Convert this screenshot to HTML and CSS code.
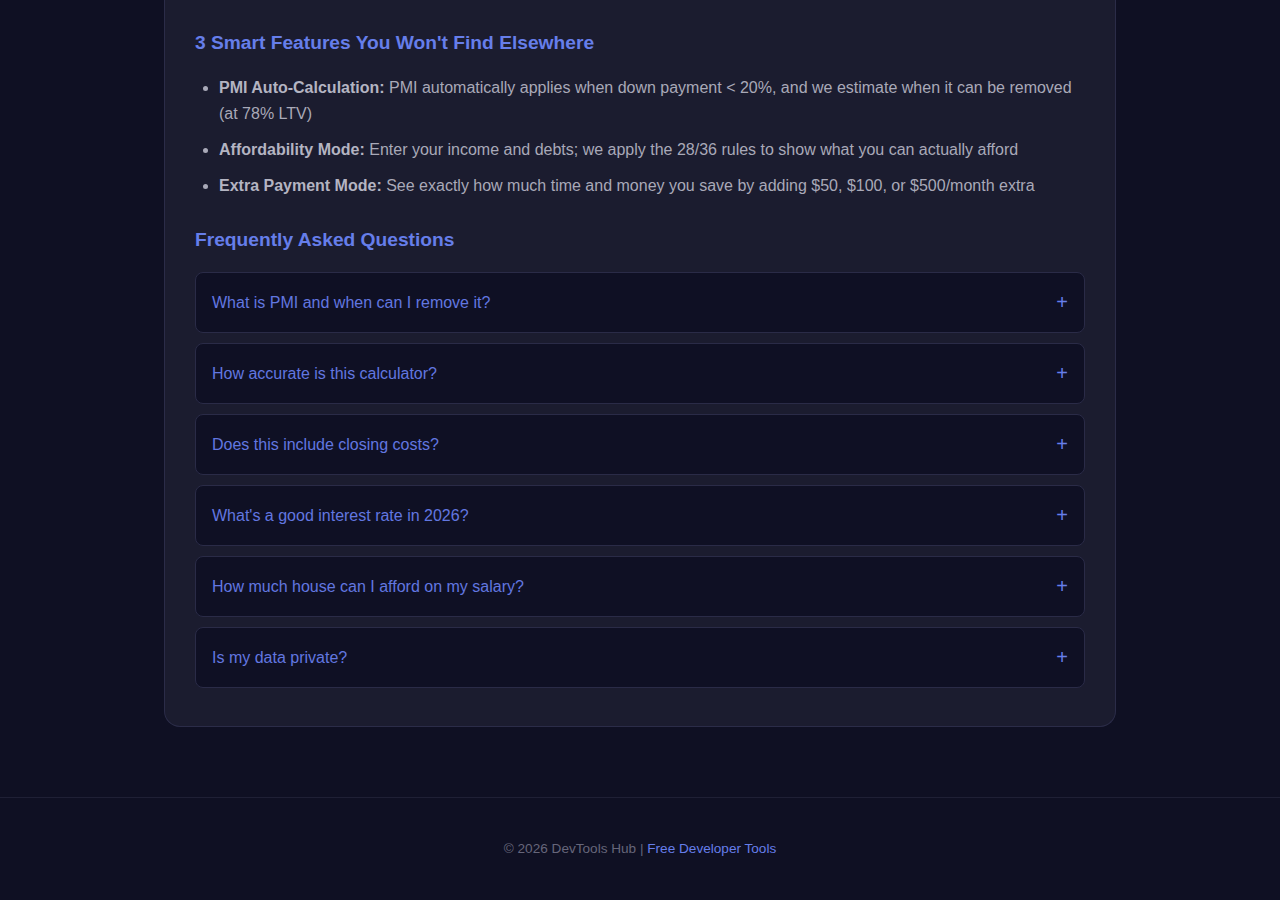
FILE: index.html
```html
<!DOCTYPE html>
<html lang="en">
<head>
    <meta charset="UTF-8">
    <meta name="viewport" content="width=device-width, initial-scale=1.0">
    <title>Mortgage Calculator - DevTools Hub</title>
    <link rel="stylesheet" href="styles.css">
</head>
<body>
    <main class="page">
        <section class="info-card">
            <h3>3 Smart Features You Won't Find Elsewhere</h3>
            <ul class="feature-list">
                <li><strong>PMI Auto-Calculation:</strong> PMI automatically applies when down payment &lt; 20%, and we estimate when it can be removed (at 78% LTV)</li>
                <li><strong>Affordability Mode:</strong> Enter your income and debts; we apply the 28/36 rules to show what you can actually afford</li>
                <li><strong>Extra Payment Mode:</strong> See exactly how much time and money you save by adding $50, $100, or $500/month extra</li>
            </ul>

            <h3>Frequently Asked Questions</h3>
            <div class="faq">
                <div class="faq-item"><span class="faq-q">What is PMI and when can I remove it?</span><span class="faq-toggle">+</span></div>
                <div class="faq-item"><span class="faq-q">How accurate is this calculator?</span><span class="faq-toggle">+</span></div>
                <div class="faq-item"><span class="faq-q">Does this include closing costs?</span><span class="faq-toggle">+</span></div>
                <div class="faq-item"><span class="faq-q">What's a good interest rate in 2026?</span><span class="faq-toggle">+</span></div>
                <div class="faq-item"><span class="faq-q">How much house can I afford on my salary?</span><span class="faq-toggle">+</span></div>
                <div class="faq-item"><span class="faq-q">Is my data private?</span><span class="faq-toggle">+</span></div>
            </div>
        </section>
    </main>

    <footer class="site-footer">
        <p>&copy; 2026 DevTools Hub | <a href="#">Free Developer Tools</a></p>
    </footer>
</body>
</html>
```

FILE: styles.css
```css
body {
    font-family: "Liberation Sans", Arial, sans-serif;
    margin: 0;
    padding: 0;
    background-color: #0f1023;
    color: #a9a9b8;
}

.page {
    padding: 0 20px;
}

.info-card {
    box-sizing: border-box;
    max-width: 952px;
    margin: 0 auto;
    padding: 31px 30px 28px;
    background: #1b1c2f;
    border: 1px solid #2b2c48;
    border-top: none;
    border-radius: 0 0 16px 16px;
}

.info-card h3 {
    margin: 0 0 20px;
    font-size: 19.2px;
    line-height: 24px;
    color: #667eea;
}

.feature-list {
    margin: 0 0 29px;
    padding-left: 24px;
}

.feature-list li {
    margin-bottom: 10px;
    font-size: 16px;
    line-height: 26px;
}

.feature-list strong {
    color: #b4b4c2;
}

.faq-item {
    display: flex;
    justify-content: space-between;
    align-items: center;
    margin-bottom: 10px;
    padding: 20px 16px;
    background: #0f1024;
    border: 1px solid #2a2b47;
    border-radius: 8px;
    cursor: pointer;
}

.faq-q {
    font-size: 16px;
    line-height: 19px;
    color: #6277e0;
}

.faq-toggle {
    font-size: 20px;
    line-height: 19px;
    color: #667eea;
}

.site-footer {
    margin-top: 70px;
    padding: 43px 20px 42px;
    border-top: 1px solid #1f2035;
    text-align: center;
}

.site-footer p {
    margin: 0;
    font-size: 13.6px;
    line-height: 16px;
    color: #66667a;
}

.site-footer a {
    color: #667eea;
    text-decoration: none;
}
```
